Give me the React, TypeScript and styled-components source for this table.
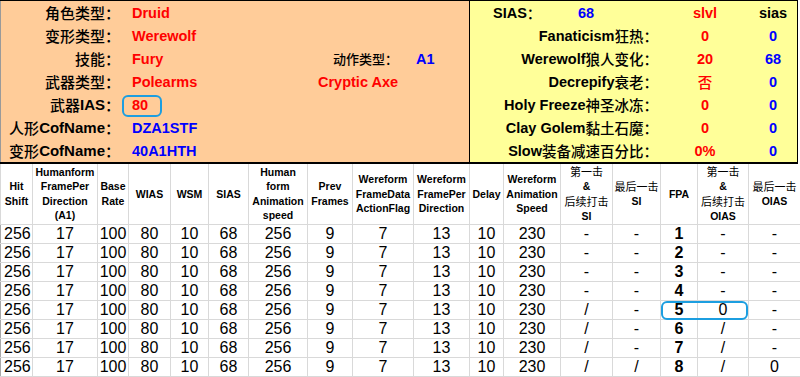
import React from 'react';
import styled, {createGlobalStyle} from 'styled-components';

const RED = '#ff0000';
const BLUE = '#0000ff';

const GlobalStyle = createGlobalStyle`
  body {
    margin: 0;
    background: #ffffff;
    font-family: "Liberation Sans", Arial, "Noto Sans CJK SC", sans-serif;
  }
`

const CJK = /([\u3000-\u9fff\uff00-\uffef]+)/;

const Mixed = ({text}: {text: string}) => (
    <>
        {text.split(CJK).map((part, i) =>
            CJK.test(part) ? <Cn key={i}>{part}</Cn> : part
        )}
    </>
);

type InfoRow = {
    label: string
    value: string
    color: string
    extraLabel?: string
    extraValue?: string
    extraText?: string
}

const infoRows: InfoRow[] = [
    {label: '角色类型：', value: 'Druid', color: RED},
    {label: '变形类型：', value: 'Werewolf', color: RED},
    {label: '技能：', value: 'Fury', color: RED, extraLabel: '动作类型：', extraValue: 'A1'},
    {label: '武器类型：', value: 'Polearms', color: RED, extraText: 'Cryptic Axe'},
    {label: '武器IAS：', value: '80', color: RED},
    {label: '人形CofName：', value: 'DZA1STF', color: BLUE},
    {label: '变形CofName：', value: '40A1HTH', color: BLUE},
];

const skillRows = [
    {label: 'Fanaticism狂热：', slvl: '0', sias: '0'},
    {label: 'Werewolf狼人变化：', slvl: '20', sias: '68'},
    {label: 'Decrepify衰老：', slvl: '否', sias: '0'},
    {label: 'Holy Freeze神圣冰冻：', slvl: '0', sias: '0'},
    {label: 'Clay Golem黏土石魔：', slvl: '0', sias: '0'},
    {label: 'Slow装备减速百分比：', slvl: '0%', sias: '0'},
];

const columns = [32, 65, 31, 42, 38, 40, 59, 45, 61, 56, 34, 57, 52, 48, 37, 51, 52];

const headers = [
    'Hit\nShift',
    'Humanform\nFramePer\nDirection\n(A1)',
    'Base\nRate',
    'WIAS',
    'WSM',
    'SIAS',
    'Human\nform\nAnimation\nspeed',
    'Prev\nFrames',
    'Wereform\nFrameData\nActionFlag',
    'Wereform\nFramePer\nDirection',
    'Delay',
    'Wereform\nAnimation\nSpeed',
    '第一击\n&\n后续打击\nSI',
    '最后一击\nSI',
    'FPA',
    '第一击\n&\n后续打击\nOIAS',
    '最后一击\nOIAS',
];

const base = ['256', '17', '100', '80', '10', '68', '256', '9', '7', '13', '10', '230'];
const tails = [
    ['-', '-', '1', '-', '-'],
    ['-', '-', '2', '-', '-'],
    ['-', '-', '3', '-', '-'],
    ['-', '-', '4', '-', '-'],
    ['/', '-', '5', '0', '-'],
    ['/', '-', '6', '/', '-'],
    ['/', '-', '7', '/', '-'],
    ['/', '/', '8', '/', '0'],
];

export default function App() {
    return (
        <Page>
            <GlobalStyle/>
            <TopSection>
                <InfoPanel>
                    {infoRows.map((r) => (
                        <React.Fragment key={r.label}>
                            <InfoLabel><Mixed text={r.label}/></InfoLabel>
                            <Value color={r.color} indent={12}>{r.value}</Value>
                            {r.extraLabel
                                ? <SmallLabel><Mixed text={r.extraLabel}/></SmallLabel>
                                : <Value color={RED}>{r.extraText}</Value>}
                            <Value color={BLUE} indent={16}>{r.extraValue}</Value>
                        </React.Fragment>
                    ))}
                </InfoPanel>
                <SpeedPanel>
                    <SiasCell>
                        <SiasLabel><Mixed text="SIAS："/></SiasLabel>
                        <Value color={BLUE}>68</Value>
                    </SiasCell>
                    <Center color={RED}>slvl</Center>
                    <Center color="#000">sias</Center>
                    <span/>
                    {skillRows.map((r) => (
                        <React.Fragment key={r.label}>
                            <Label><Mixed text={r.label}/></Label>
                            <Center color={RED}><Mixed text={r.slvl}/></Center>
                            <Center color={BLUE}>{r.sias}</Center>
                            <span/>
                        </React.Fragment>
                    ))}
                </SpeedPanel>
            </TopSection>
            <DataTable>
                <colgroup>
                    {columns.map((w, i) => <col key={i} style={{width: w}}/>)}
                </colgroup>
                <thead>
                <tr>
                    {headers.map((h) => (
                        <HeadCell key={h}><Mixed text={h}/></HeadCell>
                    ))}
                </tr>
                </thead>
                <tbody>
                {tails.map((t, ri) => (
                    <tr key={ri}>
                        {[...base, ...t].map((v, ci) => (
                            <Cell key={ci} first={ci === 0} bold={ci === 14}>{v}</Cell>
                        ))}
                    </tr>
                ))}
                </tbody>
            </DataTable>
            <Highlight style={{left: 122, top: 95, width: 40, height: 22}}/>
            <Highlight style={{left: 661, top: 301, width: 87, height: 19}}/>
        </Page>
    );
}

const Page = styled.div`
  position: relative;
  width: 800px;
  height: 377px;
  overflow: hidden;
  background: #ffffff;
`

const TopSection = styled.div`
  display: flex;
  width: 798px;
  border-top: 1px solid #000;
  border-bottom: 2px solid #000;
`

const InfoPanel = styled.div`
  display: grid;
  grid-template-columns: 119px 198px 82px 1fr;
  grid-auto-rows: 23px;
  width: 468px;
  background: #ffcc99;
  border-left: 1px solid #9a9a9a;
  border-right: 1px solid #000;
`

const SpeedPanel = styled.div`
  display: grid;
  grid-template-columns: 188px 94px 42px 1fr;
  grid-auto-rows: 23px;
  flex: 1;
  background: #ffff99;
  border-right: 1px solid #000;
`

const Label = styled.div`
  display: flex;
  align-items: center;
  justify-content: flex-end;
  white-space: nowrap;
  font-size: 14.5px;
  font-weight: bold;
  color: #000;
`

const InfoLabel = styled(Label)`
  font-size: 15px;
`

const SmallLabel = styled(Label)`
  font-size: 13px;
  padding-right: 2px;
`

type ValueProps = {
    color: string
    indent?: number
}

const Value = styled.div<ValueProps>`
  display: flex;
  align-items: center;
  padding-left: ${({indent}) => indent || 0}px;
  white-space: nowrap;
  font-size: 14.5px;
  font-weight: bold;
  color: ${({color}) => color};
`

const Center = styled(Value)`
  justify-content: center;
`

const SiasCell = styled.div`
  display: flex;
  align-items: center;
  padding-left: 23px;
`

const SiasLabel = styled(Label)`
  width: 85px;
  justify-content: flex-start;
`

const Cn = styled.span`
  font-family: "Noto Sans CJK SC", sans-serif;
  font-weight: 500;
`

const DataTable = styled.table`
  width: 800px;
  table-layout: fixed;
  border-collapse: collapse;
  color: #000;
`

const HeadCell = styled.th`
  height: 59px;
  padding: 0;
  border: 1px solid #d9d9d9;
  border-top: none;
  white-space: pre-line;
  font-size: 10.5px;
  line-height: 14.4px;
  font-weight: bold;
  text-align: center;
  vertical-align: middle;

  ${Cn} {
    font-size: 11px;
    font-weight: normal;
  }
`

type CellProps = {
    first?: boolean
    bold?: boolean
}

const Cell = styled.td<CellProps>`
  height: 18px;
  padding: 0 0 0 ${({first}) => first ? '3px' : '0'};
  border: 1px solid #d9d9d9;
  border-left-color: ${({first}) => first ? '#a8a8a8' : '#d9d9d9'};
  font-size: 16px;
  line-height: 18px;
  font-weight: ${({bold}) => bold ? 'bold' : 'normal'};
  text-align: ${({first}) => first ? 'left' : 'center'};
  white-space: nowrap;
  overflow: hidden;
`

const Highlight = styled.div`
  position: absolute;
  box-sizing: border-box;
  border: 2px solid #1c9ee0;
  border-radius: 6px;
  pointer-events: none;
`
